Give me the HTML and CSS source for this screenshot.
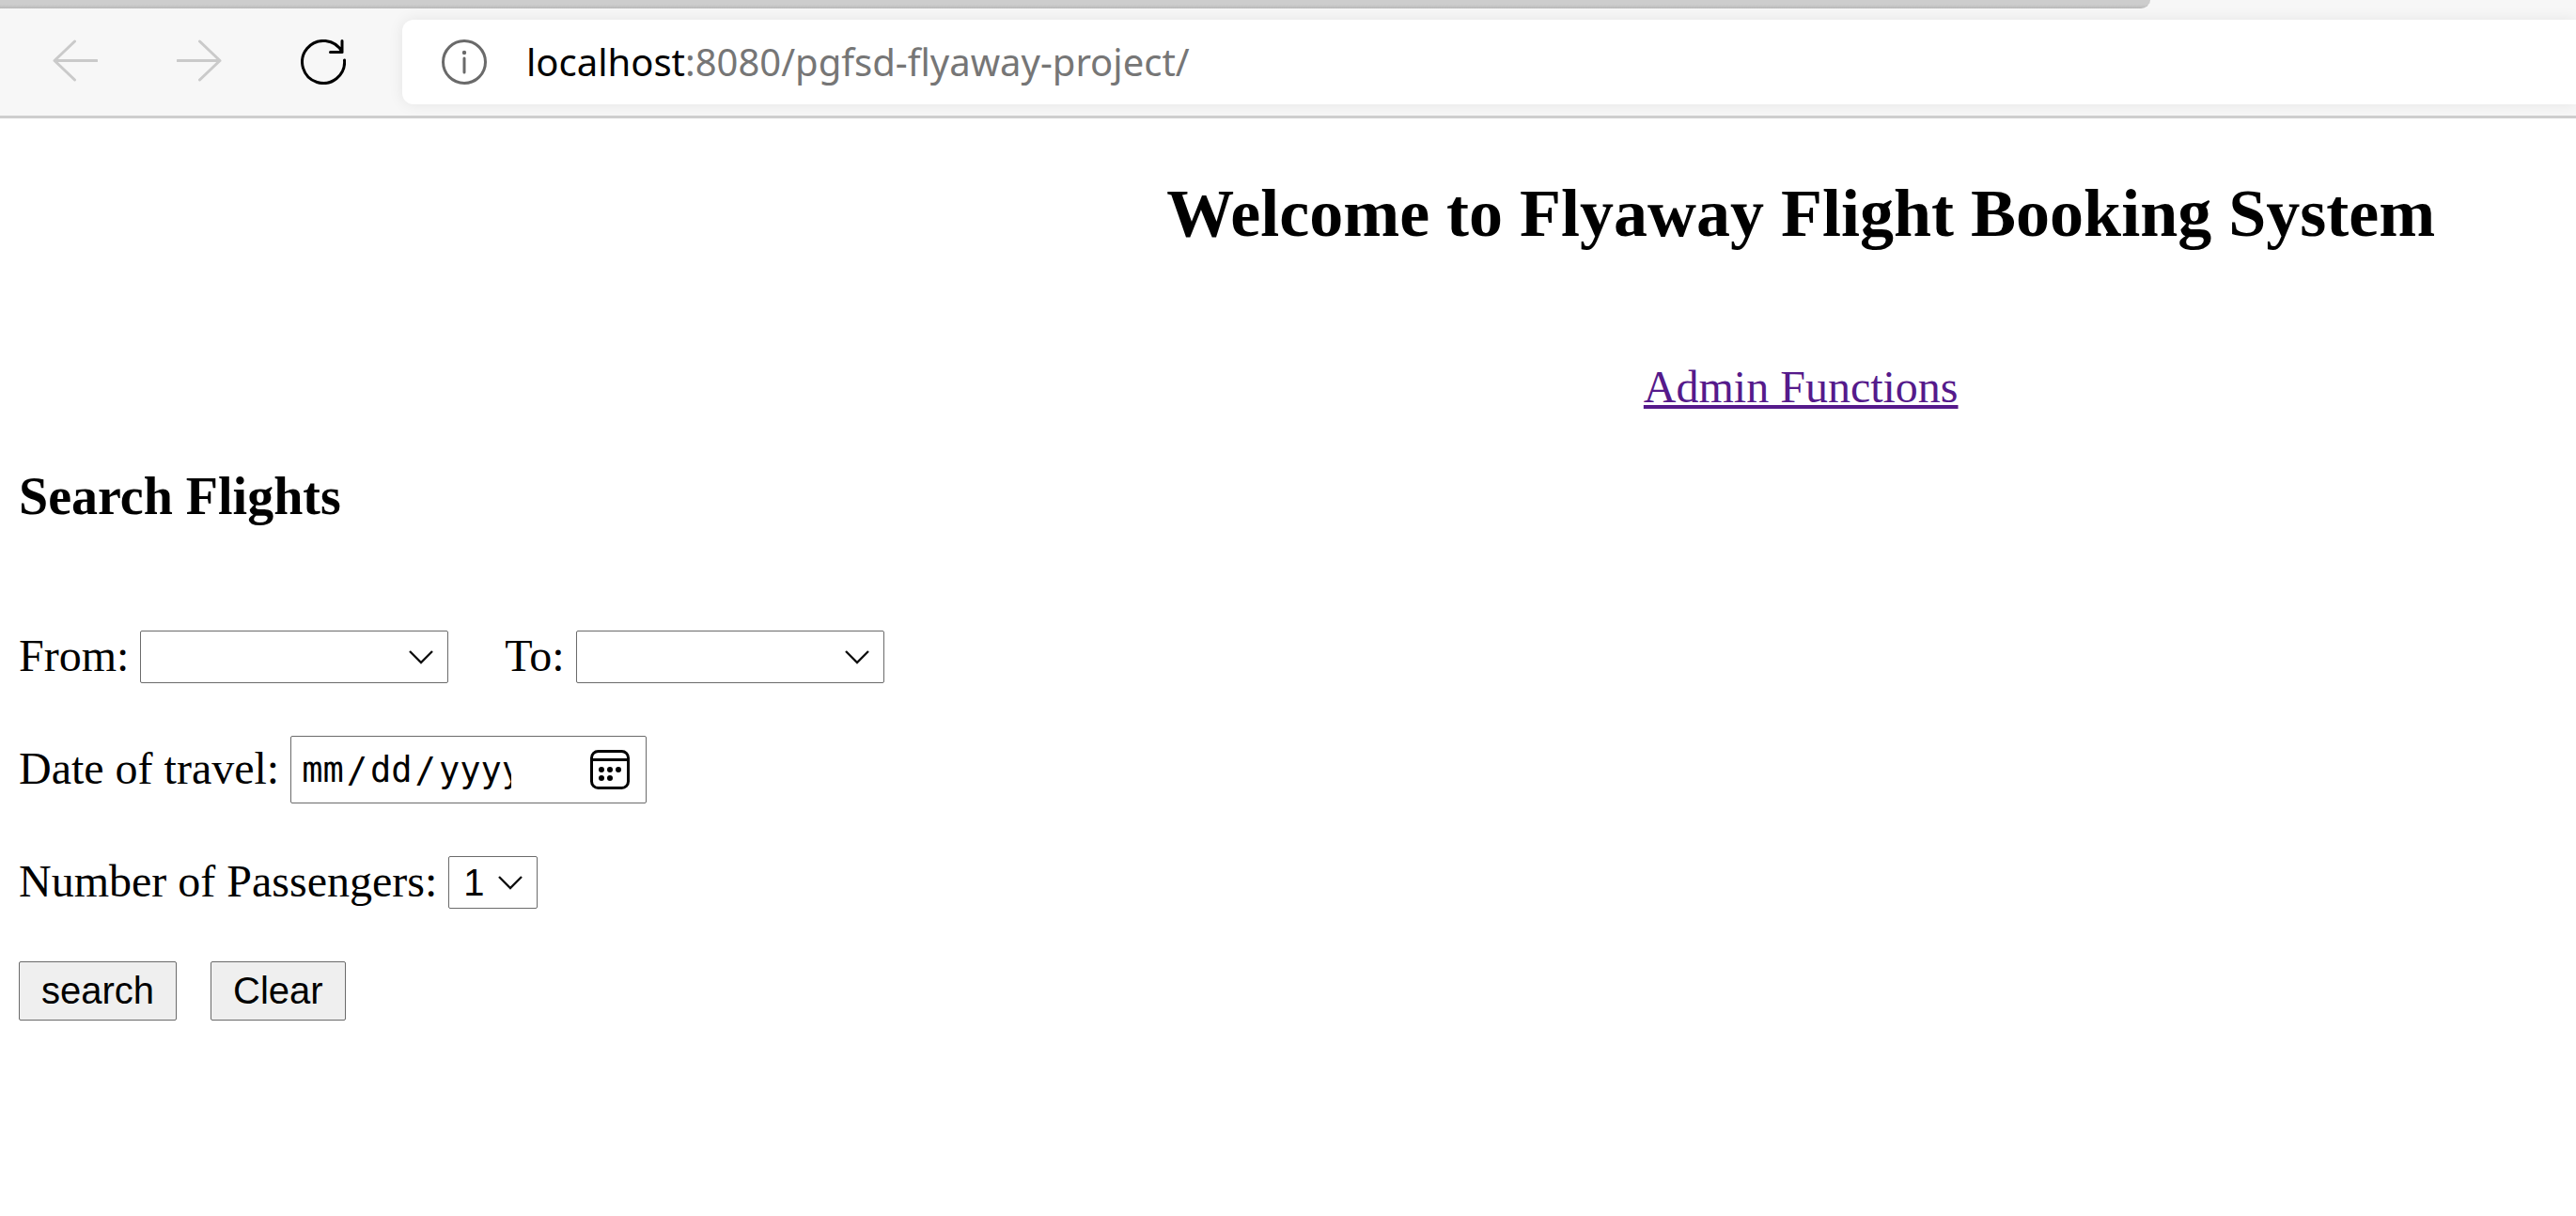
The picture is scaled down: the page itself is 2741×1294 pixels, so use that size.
FILE: index.html
```html
<!DOCTYPE html>
<html lang="en-US">
<head>
<meta charset="utf-8">
<title>Flyaway</title>
<link rel="stylesheet" href="styles.css">
</head>
<body>
<div class="browser">
  <div class="tabstrip"></div>
  <nav class="toolbar" aria-label="Browser">
    <div class="nav-buttons">
      <button class="nav-button" type="button" aria-label="Back" disabled>
        <svg class="icon" viewBox="0 0 48 48"><path d="M47 22.5H2M23.5 2L2 22.5L23.5 43"/></svg>
      </button>
      <button class="nav-button" type="button" aria-label="Forward" disabled>
        <svg class="icon" viewBox="0 0 48 48"><path d="M1 22.5H46M24.5 2L46 22.5L24.5 43"/></svg>
      </button>
      <button class="nav-button" type="button" aria-label="Refresh">
        <svg class="icon" viewBox="0 0 48 48"><path d="M44 13.5A22.5 22.5 0 1 0 46.5 22M44 1.5V13.5H31.5"/></svg>
      </button>
    </div>
    <div class="address">
      <svg class="icon info" viewBox="0 0 48 48"><circle cx="24" cy="24" r="22.5"/><path d="M24 20V35"/><circle class="dot" cx="24" cy="14" r="2.2"/></svg>
      <span class="url"><span class="host">localhost</span>:8080/pgfsd-flyaway-project/</span>
    </div>
  </nav>
</div>
<main>
  <header class="banner">
    <h2 class="title">Welcome to Flyaway Flight Booking System</h2>
    <a class="admin" href="#admin">Admin Functions</a>
  </header>
  <section class="search">
    <h3 class="subtitle">Search Flights</h3>
    <form class="form">
      <div class="row">
        <div class="field">
          <label class="label" for="from">From:</label>
          <select class="select city" id="from"><option></option></select>
        </div>
        <div class="field">
          <label class="label" for="to">To:</label>
          <select class="select city" id="to"><option></option></select>
        </div>
      </div>
      <div class="field">
        <label class="label" for="date">Date of travel:</label>
        <input class="date" id="date" type="date">
      </div>
      <div class="field">
        <label class="label" for="count">Number of Passengers:</label>
        <select class="select count" id="count"><option>1</option><option>2</option><option>3</option></select>
      </div>
      <div class="actions">
        <button class="button" type="submit">search</button>
        <button class="button" type="reset">Clear</button>
      </div>
    </form>
  </section>
</main>
</body>
</html>
```
FILE: styles.css
```css
* {
  box-sizing: border-box;
}

body {
  margin: 0;
  background: #fff;
  color: #000;
  font: 48px "Liberation Serif", "Times New Roman", serif;
  overflow-x: hidden;
}

.browser {
  background: #f7f7f7;
  border-bottom: 3px solid #cecece;
}

.tabstrip {
  height: 9px;
  margin-right: calc(17% - 13px);
  background: linear-gradient(#cdcdcd 5px, #b8b8b8);
  border-bottom-right-radius: 10px 9px;
}

.toolbar {
  display: flex;
  align-items: center;
  gap: 60px;
  padding: 12px 0 12px 56px;
}

.nav-buttons {
  display: flex;
  gap: 84px;
}

.nav-button {
  display: block;
  padding: 0;
  border: 0;
  background: none;
  color: #000;
}

.nav-button:disabled {
  color: #cacaca;
}

.icon {
  display: block;
  flex: none;
  width: 48px;
  height: 48px;
  fill: none;
  stroke: currentColor;
  stroke-width: 3px;
  stroke-linecap: round;
  stroke-linejoin: round;
}

.info {
  color: #6a6a6a;
}

.dot {
  fill: currentColor;
  stroke: none;
}

.address {
  flex: 1;
  display: flex;
  align-items: center;
  gap: 42px;
  height: 90px;
  padding-left: 42px;
  border-radius: 12px 0 0 12px;
  background: #fff;
  box-shadow: 0 0 16px rgba(0, 0, 0, 0.08);
}

.url {
  color: #767676;
  font: 40px/48px "Noto Sans", "Segoe UI", sans-serif;
  white-space: nowrap;
}

.host {
  color: #000;
}

.banner {
  display: flex;
  flex-direction: column;
  align-items: center;
  gap: 115px;
  padding: 60px 0 0 calc(40% - 5px);
}

.title {
  margin: 0;
  font-size: 72px;
  line-height: 83px;
  white-space: nowrap;
}

.admin {
  color: #551a8b;
  line-height: 56px;
  text-decoration-thickness: 4px;
  text-underline-offset: 3px;
}

.search {
  padding: 56px 20px 24px;
}

.subtitle {
  margin: 0 0 111px;
  font-size: 56px;
  line-height: 64px;
}

.form {
  display: flex;
  flex-direction: column;
  gap: 56px;
}

.row {
  display: flex;
  gap: 60px;
}

.field {
  display: flex;
  align-items: center;
  gap: 12px;
  line-height: 52px;
}

.label {
  padding-bottom: 2px;
}

.select {
  appearance: none;
  height: 56px;
  padding: 0 15px;
  border: 1px solid #6b6b6b;
  border-radius: 2px;
  background: #fff url("data:image/svg+xml,%3Csvg xmlns='http://www.w3.org/2000/svg' width='26' height='15'%3E%3Cpath d='M1 1L13 13L25 1' fill='none' stroke='%23101010' stroke-width='2.4'/%3E%3C/svg%3E") no-repeat right 15px center;
  color: #000;
  font: 40px "Liberation Sans", Arial, sans-serif;
}

.city {
  width: 328px;
}

.count {
  width: 95px;
}

.date {
  width: 379px;
  height: 72px;
  padding: 0 17px 0 8px;
  border: 1px solid #6b6b6b;
  border-radius: 2px;
  background: #fff;
  color: #000;
  font: 37px "DejaVu Sans Mono", Consolas, monospace;
}

.date::-webkit-datetime-edit {
  min-width: 0;
  overflow: hidden;
}

.date::-webkit-datetime-edit-month-field,
.date::-webkit-datetime-edit-day-field,
.date::-webkit-datetime-edit-year-field {
  padding: 0 3px;
}

.date::-webkit-calendar-picker-indicator {
  flex: none;
  width: 42px;
  height: 42px;
  margin: 0 0 0 84px;
  padding: 0;
  background: url("data:image/svg+xml,%3Csvg xmlns='http://www.w3.org/2000/svg' width='42' height='42'%3E%3Crect x='1.5' y='1.5' width='39' height='39' rx='7' fill='none' stroke='%23000' stroke-width='3'/%3E%3Cpath d='M2 10.5H40' stroke='%23000' stroke-width='3'/%3E%3Cg%3E%3Ccircle cx='12' cy='21' r='3'/%3E%3Ccircle cx='21' cy='21' r='3'/%3E%3Ccircle cx='30' cy='21' r='3'/%3E%3Ccircle cx='12' cy='30' r='3'/%3E%3Ccircle cx='21' cy='30' r='3'/%3E%3C/g%3E%3C/svg%3E") no-repeat center;
}

.actions {
  display: flex;
  gap: 36px;
}

.button {
  height: 63px;
  padding: 0 23px;
  border: 1px solid #6b6b6b;
  border-radius: 2px;
  background: #efefef;
  color: #000;
  font: 40px "Liberation Sans", Arial, sans-serif;
}
```
